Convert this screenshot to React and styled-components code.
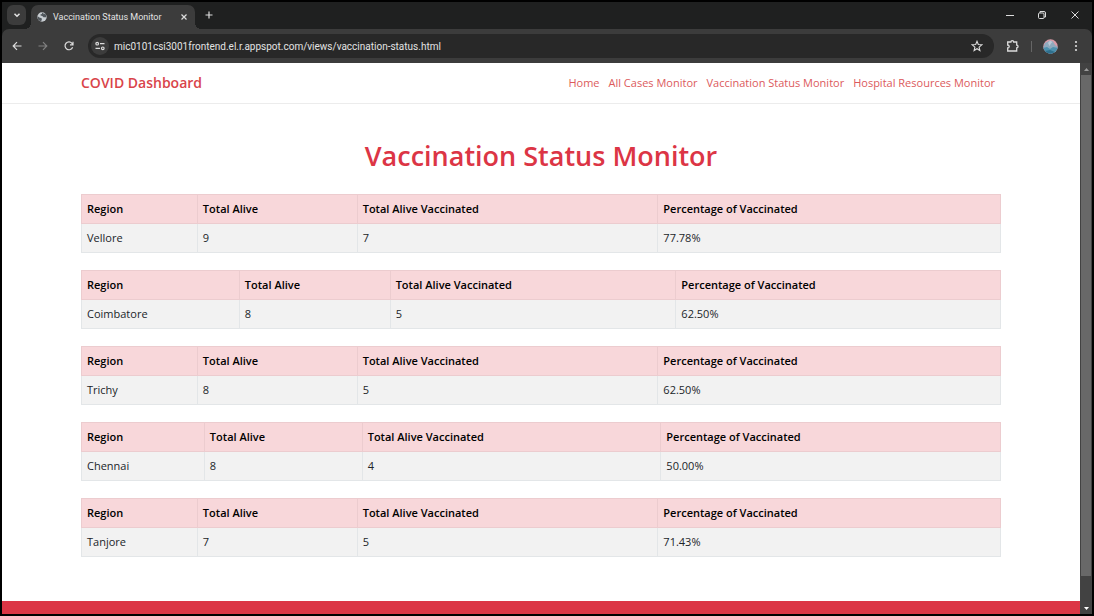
import React from "react";
import styled, { createGlobalStyle } from "styled-components";

const GlobalStyle = createGlobalStyle`
  *, *::before, *::after { box-sizing: border-box; }
  body {
    margin: 0;
    background: #000;
    font-family: "Open Sans", "Noto Sans", sans-serif;
    font-size: 11px;
    line-height: 18px;
    color: #212529;
  }
  button { font: inherit; border: 0; padding: 0; background: none; color: inherit; }
`;

const Window = styled.div`
  height: 100vh;
  display: flex;
  flex-direction: column;
  border: 2px solid #000;
  background: #1f2020;
  overflow: hidden;
`;

const TabStrip = styled.header`
  flex: none;
  display: flex;
  align-items: flex-start;
  height: 27px;
  padding: 3px 0 0 5px;
  color: #e3e3e3;
`;

const TabSearch = styled.button`
  display: grid;
  place-items: center;
  width: 19px;
  height: 20px;
  border-radius: 6px;
  background: #3c3c3c;
`;

const Tab = styled.div`
  position: relative;
  display: flex;
  align-items: center;
  gap: 6px;
  width: 164px;
  height: 24px;
  margin-left: 5px;
  padding: 0 6px;
  border-radius: 7px 7px 0 0;
  background: #3c3c3c;
  font-family: Roboto, sans-serif;
  font-size: 9px;
  line-height: 14px;

  &::before, &::after {
    content: "";
    position: absolute;
    bottom: 0;
    width: 6px;
    height: 6px;
  }
  &::before { left: -6px; background: radial-gradient(circle at 0 0, transparent 6px, #3c3c3c 6px); }
  &::after { right: -6px; background: radial-gradient(circle at 100% 0, transparent 6px, #3c3c3c 6px); }
`;

const TabTitle = styled.span`
  flex: 1;
  white-space: nowrap;
`;

const IconButton = styled.button`
  flex: none;
  display: grid;
  place-items: center;
  width: ${(p) => p.$width || 14}px;
  height: 20px;
  color: ${(p) => (p.$dim ? "#808080" : "#dcdcdc")};
`;

const NewTab = styled(IconButton)`
  margin-left: 7px;
`;

const WindowControls = styled.div`
  display: flex;
  margin-left: auto;
`;

const Toolbar = styled.div`
  flex: none;
  display: flex;
  align-items: center;
  height: 34px;
  padding: 0 9px 0 8px;
  border-radius: 7px 7px 0 0;
  background: #3c3c3c;
`;

const NavButtons = styled.div`
  display: flex;
  gap: 12px;
  margin-right: 12px;
`;

const AddressBar = styled.div`
  flex: 1;
  display: flex;
  align-items: center;
  height: 24px;
  padding: 0 10px 0 3px;
  border-radius: 12px;
  background: #282828;
`;

const SiteInfo = styled.button`
  display: grid;
  place-items: center;
  width: 18px;
  height: 18px;
  border-radius: 9px;
  background: #3c3c3c;
  color: #dcdcdc;
`;

const Address = styled.input`
  flex: 1;
  min-width: 0;
  border: 0;
  outline: 0;
  padding: 0 5px;
  background: transparent;
  color: #e3e3e3;
  font-family: Roboto, sans-serif;
  font-size: 10px;
`;

const ToolbarEnd = styled.div`
  display: flex;
  align-items: center;
  margin-left: 12px;
`;

const Divider = styled.span`
  width: 1px;
  height: 11px;
  margin: 0 11px;
  background: #666;
`;

const ProfileButton = styled(IconButton)`
  margin-right: 12px;
`;

const Viewport = styled.div`
  flex: 1;
  min-height: 0;
  display: flex;
`;

const Page = styled.div`
  flex: 1;
  min-width: 0;
  display: flex;
  flex-direction: column;
  background: #fff;
`;

const NavBar = styled.nav`
  display: flex;
  align-items: center;
  justify-content: space-between;
  height: 41px;
  padding: 0 85px 0 79px;
  border-bottom: 1px solid #ececec;
`;

const Brand = styled.a`
  color: #d9444a;
  font-size: 14px;
  font-weight: 600;
  text-decoration: none;
  white-space: nowrap;
`;

const NavLinks = styled.div`
  display: flex;
  gap: 9px;
`;

const NavLink = styled.a`
  color: #dc5a5c;
  text-decoration: none;
  white-space: nowrap;
`;

const Main = styled.main`
  flex: 1;
  padding: 33px 79px 0;
`;

const Title = styled.h1`
  margin: 0 0 20px;
  color: #dc3545;
  font-size: 27px;
  line-height: 37px;
  font-weight: 600;
  text-align: center;
`;

const RegionTable = styled.table`
  width: 100%;
  margin-bottom: 17px;
  table-layout: fixed;
  border-collapse: collapse;
`;

const Column = styled.col`
  width: ${(p) => p.$share}%;
`;

const HeadCell = styled.th`
  height: 29px;
  padding: 0 5px;
  border: 1px solid #eccccf;
  background: #f8d7da;
  color: #000;
  font-weight: 600;
  text-align: left;
`;

const Cell = styled.td`
  height: 29px;
  padding: 0 5px;
  border: 1px solid #e3e6e8;
  background: #f2f2f2;
`;

const Footer = styled.footer`
  height: 13px;
  background: #dc3545;
`;

const ScrollBar = styled.div`
  flex: none;
  display: flex;
  flex-direction: column;
  width: 12px;
  background: #424242;
`;

const ScrollArrow = styled.button`
  flex: none;
  display: grid;
  place-items: center;
  height: 12px;
  color: ${(p) => (p.$active ? "#fff" : "#9a9a9a")};
`;

const ScrollTrack = styled.div`
  flex: 1;
  padding: 0 1px;
`;

const ScrollThumb = styled.div`
  height: 95%;
  background: #686868;
`;

const Stroke = ({ size = 10, width = 1.2, children }) => (
  <svg width={size} height={size} viewBox={`0 0 ${size} ${size}`} fill="none" stroke="currentColor" strokeWidth={width} aria-hidden="true">
    {children}
  </svg>
);

const Globe = () => (
  <svg width="10" height="10" viewBox="0 0 10 10" aria-hidden="true">
    <circle cx="5" cy="5" r="4.7" fill="#c8cdd1" />
    <path d="M.6 4.2 2.8 5.8 4.4 5.9 4.9 7.3 4.2 9.3A4.6 4.6 0 0 1 .6 4.2ZM5.2.7 4.9 2 3.4 2.4 3.6 3.6 5.3 3.9 6.5 5.2 8.9 5.3 9.3 4A4.5 4.5 0 0 0 7.8 1.5L6.8 2.3 6.3 1Z" fill="#50565b" />
  </svg>
);

const Avatar = () => (
  <svg width="15" height="15" viewBox="0 0 15 15" aria-hidden="true">
    <defs>
      <clipPath id="avatar"><circle cx="7.5" cy="7.5" r="7.2" /></clipPath>
    </defs>
    <g clipPath="url(#avatar)">
      <path d="M0 0h15v15H0z" fill="#d99ba7" />
      <path d="M0 9 2 4 5 2.500 7 1.5 10 2.500 12 6 15 8v7H0Z" fill="#8fa9bd" />
      <path d="M5 4 7 1.5 9.5 3 8 4.5 6.5 7Z" fill="#b9c7d4" />
      <path d="M0 9 4 8 7 10 10 8 15 9v6H0Z" fill="#4d91ae" />
      <path d="M2 12 7 11 12 13 9 15H3Z" fill="#2e6f8d" />
    </g>
  </svg>
);

const links = ["Home", "All Cases Monitor", "Vaccination Status Monitor", "Hospital Resources Monitor"];
const headings = ["Region", "Total Alive", "Total Alive Vaccinated", "Percentage of Vaccinated"];

const narrow = [116, 160, 301, 343];
const medium = [123, 158, 299, 340];
const wide = [158, 151, 286, 325];

const regions = [
  { cells: ["Vellore", "9", "7", "77.78%"], columns: narrow },
  { cells: ["Coimbatore", "8", "5", "62.50%"], columns: wide },
  { cells: ["Trichy", "8", "5", "62.50%"], columns: narrow },
  { cells: ["Chennai", "8", "4", "50.00%"], columns: medium },
  { cells: ["Tanjore", "7", "5", "71.43%"], columns: narrow },
];

function BrowserChrome() {
  return (
    <>
      <TabStrip>
        <TabSearch aria-label="Search tabs">
          <Stroke size={8} width={1.5}><path d="m1.5 2.8 2.5 2.5 2.5-2.5" /></Stroke>
        </TabSearch>
        <Tab>
          <Globe />
          <TabTitle>Vaccination Status Monitor</TabTitle>
          <IconButton $width={10} aria-label="Close tab">
            <Stroke size={8}><path d="m1.5 1.5 5 5m0-5-5 5" /></Stroke>
          </IconButton>
        </Tab>
        <NewTab aria-label="New tab">
          <Stroke size={8}><path d="M4 .5v7M.5 4h7" /></Stroke>
        </NewTab>
        <WindowControls>
          <IconButton $width={32} aria-label="Minimize">
            <Stroke size={8} width={1}><path d="M0 4.5h8" /></Stroke>
          </IconButton>
          <IconButton $width={32} aria-label="Restore">
            <Stroke size={8} width={1}>
              <rect x=".5" y="2" width="5.5" height="5.5" rx="1" />
              <path d="M2 2V.5h4a1.5 1.5 0 0 1 1.5 1.5v4H6" />
            </Stroke>
          </IconButton>
          <IconButton $width={34} aria-label="Close">
            <Stroke size={8} width={1}><path d="m.5.5 7 7m0-7-7 7" /></Stroke>
          </IconButton>
        </WindowControls>
      </TabStrip>
      <Toolbar>
        <NavButtons>
          <IconButton aria-label="Back">
            <Stroke><path d="M9.500 5H1.500M5 1.200 1.200 5 5 8.800" /></Stroke>
          </IconButton>
          <IconButton $dim aria-label="Forward">
            <Stroke><path d="M.5 5h8M5 1.200 8.800 5 5 8.800" /></Stroke>
          </IconButton>
          <IconButton aria-label="Reload">
            <Stroke><path d="M8.600 6.200A3.900 3.900 0 1 1 8 2.400L8.800 3.500M9 .8v3H6" /></Stroke>
          </IconButton>
        </NavButtons>
        <AddressBar>
          <SiteInfo aria-label="View site information">
            <Stroke>
              <circle cx="2.200" cy="2.700" r="1.300" />
              <path d="M5 2.700h4.500M.5 7.300H5" />
              <circle cx="7.800" cy="7.300" r="1.300" />
            </Stroke>
          </SiteInfo>
          <Address aria-label="Address" defaultValue="mic0101csi3001frontend.el.r.appspot.com/views/vaccination-status.html" />
          <IconButton aria-label="Bookmark this tab">
            <Stroke size={12} width={1.1}>
              <path d="m6 1.300 1.300 3.200 3.500.3-2.700 2.300.8 3.400L6 8.700l-2.900 1.800.8-3.400L1.200 4.800l3.500-.3Z" />
            </Stroke>
          </IconButton>
        </AddressBar>
        <ToolbarEnd>
          <IconButton aria-label="Extensions">
            <Stroke size={14} width={1.3}>
              <path d="M1.700 3h3.200a1.400 1.400 0 0 1 2.800 0h3v3.200a1.300 1.300 0 0 1 0 2.700V12h-9V9a1.500 1.500 0 0 0 0-3Z" />
            </Stroke>
          </IconButton>
          <Divider />
          <ProfileButton aria-label="Profile"><Avatar /></ProfileButton>
          <IconButton aria-label="Menu">
            <svg width="4" height="12" viewBox="0 0 4 12" fill="currentColor" aria-hidden="true">
              <circle cx="2" cy="2" r="1.100" />
              <circle cx="2" cy="6" r="1.100" />
              <circle cx="2" cy="10" r="1.100" />
            </svg>
          </IconButton>
        </ToolbarEnd>
      </Toolbar>
    </>
  );
}

export default function App() {
  return (
    <>
      <GlobalStyle />
      <Window>
        <BrowserChrome />
        <Viewport>
          <Page>
            <NavBar>
              <Brand href="#">COVID Dashboard</Brand>
              <NavLinks>
                {links.map((label) => <NavLink key={label} href="#">{label}</NavLink>)}
              </NavLinks>
            </NavBar>
            <Main>
              <Title>Vaccination Status Monitor</Title>
              {regions.map(({ cells, columns }) => (
                <RegionTable key={cells[0]}>
                  <colgroup>
                    {columns.map((share, i) => <Column key={i} $share={share / 9.2} />)}
                  </colgroup>
                  <thead>
                    <tr>{headings.map((text) => <HeadCell key={text} scope="col">{text}</HeadCell>)}</tr>
                  </thead>
                  <tbody>
                    <tr>{cells.map((text, i) => <Cell key={i}>{text}</Cell>)}</tr>
                  </tbody>
                </RegionTable>
              ))}
            </Main>
            <Footer />
          </Page>
          <ScrollBar>
            <ScrollArrow aria-label="Scroll up">
              <svg width="5" height="3" viewBox="0 0 5 3" fill="currentColor" aria-hidden="true"><path d="M0 3 2.500 0 5 3Z" /></svg>
            </ScrollArrow>
            <ScrollTrack><ScrollThumb /></ScrollTrack>
            <ScrollArrow $active aria-label="Scroll down">
              <svg width="5" height="3" viewBox="0 0 5 3" fill="currentColor" aria-hidden="true"><path d="M0 0h5L2.500 3Z" /></svg>
            </ScrollArrow>
          </ScrollBar>
        </Viewport>
      </Window>
    </>
  );
}
